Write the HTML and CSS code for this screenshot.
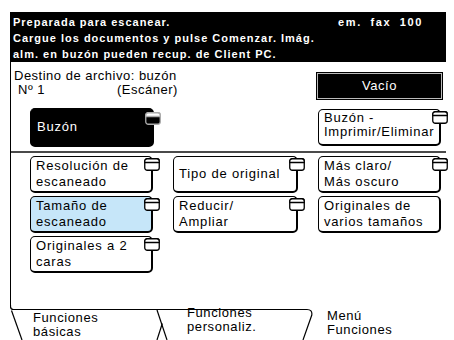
FILE: index.html
```html
<!DOCTYPE html>
<html>
<head>
  <title>Escanear a buzón</title>
<link rel="stylesheet" href="styles.css"></head>
<body>
  <div class="screen">
    <div class="status">
      <div class="status-row">
        <span>Preparada para escanear.</span>
        <span class="fax">em. fax 100</span>
      </div>
      <div>Cargue los documentos y pulse Comenzar. Imág.</div>
      <div>alm. en buzón pueden recup. de Client PC.</div>
    </div>

    <div class="panel">
      <div class="dest">
        <div class="dest-left">
          <div class="dest-text">
            <div>Destino de archivo: buzón</div>
            <div class="dest-num"><span class="num">Nº 1</span><span>(Escáner)</span></div>
          </div>
          <div class="btn btn-dark mailbox">
            Buzón
            <svg class="ico" viewBox="0 0 16 13"><rect class="ico-body" x="0.75" y="0.75" width="14.5" height="11.5" rx="2.5"/><path class="ico-top" d="M0.75 4.5 V3.25 A2.5 2.5 0 0 1 3.25 0.75 H12.75 A2.5 2.5 0 0 1 15.25 3.25 V4.5 Z"/></svg>
          </div>
        </div>
        <div class="dest-right">
          <div class="empty">Vacío</div>
          <div class="btn print">
            Buzón -<br>Imprimir/Eliminar
            <svg class="ico" viewBox="0 0 16 13"><rect class="ico-body" x="0.75" y="0.75" width="14.5" height="11.5" rx="2.5"/><path class="ico-top" d="M0.75 4.5 V3.25 A2.5 2.5 0 0 1 3.25 0.75 H12.75 A2.5 2.5 0 0 1 15.25 3.25 V4.5 Z"/></svg>
          </div>
        </div>
      </div>

      <div class="funcs">
        <div class="btn">
          Resolución de<br>escaneado
          <svg class="ico" viewBox="0 0 16 13"><rect class="ico-body" x="0.75" y="0.75" width="14.5" height="11.5" rx="2.5"/><path class="ico-top" d="M0.75 4.5 V3.25 A2.5 2.5 0 0 1 3.25 0.75 H12.75 A2.5 2.5 0 0 1 15.25 3.25 V4.5 Z"/></svg>
        </div>
        <div class="btn">
          Tipo de original
          <svg class="ico" viewBox="0 0 16 13"><rect class="ico-body" x="0.75" y="0.75" width="14.5" height="11.5" rx="2.5"/><path class="ico-top" d="M0.75 4.5 V3.25 A2.5 2.5 0 0 1 3.25 0.75 H12.75 A2.5 2.5 0 0 1 15.25 3.25 V4.5 Z"/></svg>
        </div>
        <div class="btn">
          Más claro/<br>Más oscuro
          <svg class="ico" viewBox="0 0 16 13"><rect class="ico-body" x="0.75" y="0.75" width="14.5" height="11.5" rx="2.5"/><path class="ico-top" d="M0.75 4.5 V3.25 A2.5 2.5 0 0 1 3.25 0.75 H12.75 A2.5 2.5 0 0 1 15.25 3.25 V4.5 Z"/></svg>
        </div>
        <div class="btn btn-selected">
          Tamaño de<br>escaneado
          <svg class="ico" viewBox="0 0 16 13"><rect class="ico-body" x="0.75" y="0.75" width="14.5" height="11.5" rx="2.5"/><path class="ico-top" d="M0.75 4.5 V3.25 A2.5 2.5 0 0 1 3.25 0.75 H12.75 A2.5 2.5 0 0 1 15.25 3.25 V4.5 Z"/></svg>
        </div>
        <div class="btn">
          Reducir/<br>Ampliar
          <svg class="ico" viewBox="0 0 16 13"><rect class="ico-body" x="0.75" y="0.75" width="14.5" height="11.5" rx="2.5"/><path class="ico-top" d="M0.75 4.5 V3.25 A2.5 2.5 0 0 1 3.25 0.75 H12.75 A2.5 2.5 0 0 1 15.25 3.25 V4.5 Z"/></svg>
        </div>
        <div class="btn">
          Originales de<br>varios tamaños
        </div>
        <div class="btn">
          Originales a 2<br>caras
          <svg class="ico" viewBox="0 0 16 13"><rect class="ico-body" x="0.75" y="0.75" width="14.5" height="11.5" rx="2.5"/><path class="ico-top" d="M0.75 4.5 V3.25 A2.5 2.5 0 0 1 3.25 0.75 H12.75 A2.5 2.5 0 0 1 15.25 3.25 V4.5 Z"/></svg>
        </div>
      </div>
    </div>

    <div class="tabs">
      <svg class="tab-lines" viewBox="0 0 436 35">
        <path d="M0.5 0 V1.5 Q0.5 4.5 3.5 4.5 H297 Q302.5 4.5 301.8 10 L293 35"/>
        <path d="M1.5 5.5 L12 35"/>
        <path d="M147 35 L152.3 18.5"/>
        <path d="M147 5 L157 35"/>
      </svg>
      <div class="tab tab-basic">Funciones<br>básicas</div>
      <div class="tab tab-custom">Funciones<br>personaliz.</div>
      <div class="tab tab-menu">Menú<br>Funciones</div>
    </div>
  </div>
</body>
</html>
```

FILE: styles.css
```css
body {
    margin: 0;
    background: #fff;
    font-family: "Liberation Sans", Arial, sans-serif;
    color: #000;
  }

  .screen {
    width: 436px;
    margin-left: 10px;
    padding-top: 12px;
  }

  .status {
    box-sizing: border-box;
    height: 50px;
    padding: 2px 0 0 3px;
    background: #000;
    color: #fff;
    font-size: 11px;
    font-weight: bold;
    letter-spacing: 1px;
    line-height: 16px;
  }

  .status-row {
    display: flex;
    justify-content: space-between;
    padding-right: 23px;
  }

  .fax {
    letter-spacing: 1.6px;
    word-spacing: 4px;
  }

  .panel {
    border-left: 1px solid #000;
  }

  .dest {
    display: flex;
    justify-content: space-between;
    height: 89px;
    border-bottom: 2px solid #4a4a4a;
    font-size: 13px;
    letter-spacing: 0.5px;
  }

  .dest-left {
    padding: 7px 0 0 3px;
  }

  .dest-text {
    line-height: 14px;
  }

  .dest-num {
    display: flex;
  }

  .num {
    width: 99px;
    padding-left: 4px;
  }

  .dest-right {
    width: 130px;
    padding-top: 10px;
  }

  .empty {
    box-sizing: border-box;
    width: 127px;
    height: 28px;
    border: 1px solid #000;
    box-shadow: inset 0 0 0 1px #bbb;
    background: #000;
    color: #fff;
    font-size: 13px;
    line-height: 26px;
    text-align: center;
  }

  .btn {
    position: relative;
    box-sizing: border-box;
    display: flex;
    align-items: center;
    height: 37px;
    padding: 0 0 1px 5px;
    border: 1px solid #000;
    border-right-width: 2px;
    border-bottom-width: 2px;
    border-radius: 5px;
    background: #fff;
    font-size: 13px;
    letter-spacing: 0.8px;
    line-height: 16px;
  }

  .btn-dark {
    background: #000;
    color: #fff;
  }

  .btn-selected {
    background: #c6e6f9;
  }

  .mailbox {
    width: 124px;
    height: 39px;
    margin: 11px 0 0 16px;
    padding-left: 6px;
  }

  .print {
    width: 123px;
    height: 37px;
    margin: 9px 0 0 2px;
    align-items: flex-start;
    padding-top: 1px;
    line-height: 14px;
    letter-spacing: 0.75px;
  }

  .ico {
    position: absolute;
    top: 1px;
    right: -9px;
    width: 16px;
    height: 13px;
  }

  .ico-body {
    fill: #fff;
    stroke: #000;
    stroke-width: 1.3;
  }

  .ico-top {
    fill: #fff;
    stroke: #000;
    stroke-width: 1.3;
  }

  .btn-dark .ico {
    top: 3px;
  }

  .btn-dark .ico-body {
    fill: #000;
    stroke: #aaa;
  }

  .btn-dark .ico-top {
    stroke: #aaa;
  }

  .funcs {
    display: grid;
    grid-template-columns: 123px 125px 123px;
    grid-auto-rows: 37px;
    column-gap: 20px;
    row-gap: 3px;
    height: 152px;
    padding: 3px 0 0 19px;
    box-sizing: border-box;
  }

  .tabs {
    position: relative;
    display: flex;
    height: 35px;
    font-size: 13px;
    letter-spacing: 0.6px;
    line-height: 14px;
  }

  .tab-lines {
    position: absolute;
    left: 0;
    top: 0;
    width: 436px;
    height: 35px;
    fill: none;
    stroke: #000;
    stroke-width: 1.2;
  }

  .tab {
    position: relative;
  }

  .tab-basic {
    width: 154px;
    padding: 6px 0 0 23px;
  }

  .tab-custom {
    width: 140px;
    padding-top: 1px;
  }

  .tab-menu {
    padding-top: 4px;
  }
```
